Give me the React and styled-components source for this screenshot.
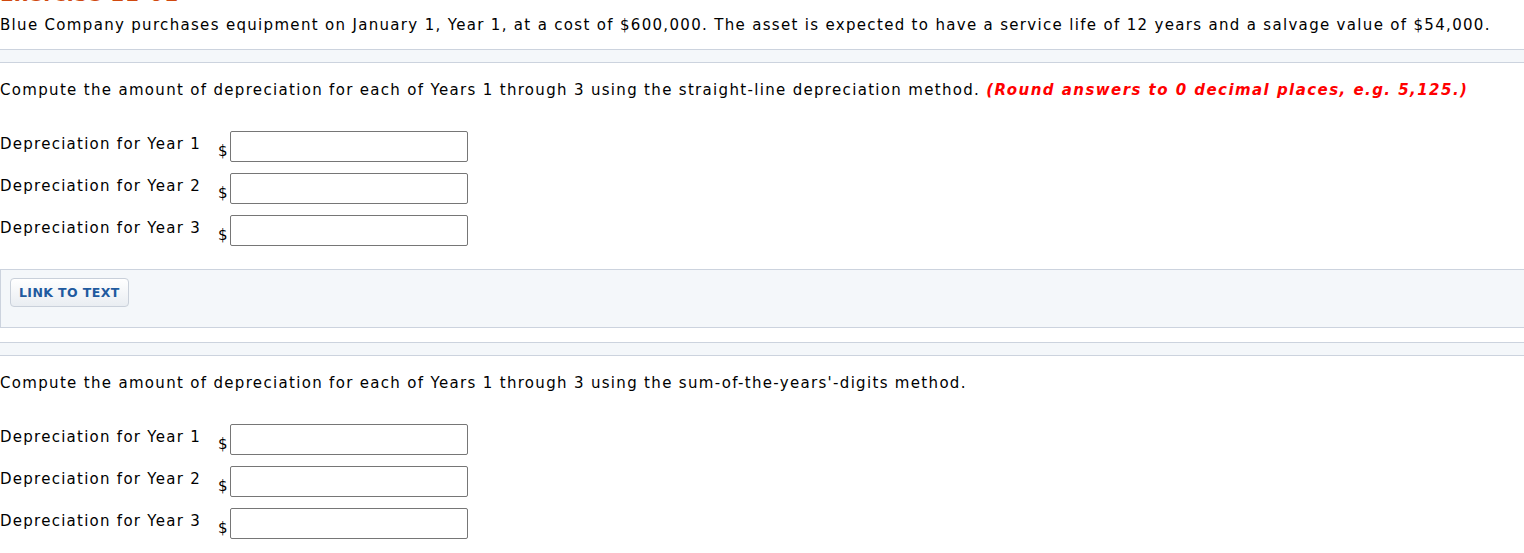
import React from 'react';
import styled, { createGlobalStyle } from 'styled-components';

const GlobalStyle = createGlobalStyle`
    body {
        margin: 0;
        background: #fff;
        font-family: "DejaVu Sans", Verdana, sans-serif;
        color: #000;
    }
`;

const Page = styled.div`
    width: 1524px;
    overflow: hidden;
`;

const Heading = styled.h2`
    margin: -18px 0 0;
    font-size: 20px;
    line-height: 24px;
    font-weight: bold;
    letter-spacing: 1px;
    color: #d0490f;
`;

const Text = styled.p`
    margin: ${(p) => p.margin || '0'};
    font-size: 15px;
    line-height: 18px;
    letter-spacing: 1.32px;
    white-space: nowrap;
`;

const Hint = styled.span`
    color: #ff0000;
    font-weight: bold;
    font-style: italic;
    letter-spacing: 1.45px;
`;

const Band = styled.div`
    height: 12px;
    margin: ${(p) => p.margin || '0'};
    background: #f4f7fa;
    border-top: 1px solid #ccd3de;
    border-bottom: 1px solid #ccd3de;
`;

const Fields = styled.div`
    display: flex;
    flex-direction: column;
    gap: 11px;
    margin-top: 32px;
`;

const Row = styled.div`
    display: flex;
    align-items: flex-start;
`;

const Label = styled.span`
    width: 218px;
    padding-top: 4px;
    font-size: 15px;
    line-height: 18px;
    letter-spacing: 1.26px;
`;

const Dollar = styled.span`
    align-self: flex-end;
    width: 12px;
    font-size: 15px;
    line-height: 18px;
    margin-bottom: 2px;
`;

const Input = styled.input`
    box-sizing: border-box;
    width: 238px;
    height: 31px;
    margin: 0;
    border: 1px solid #767676;
    border-radius: 2px;
    background: #fff;
    font-family: "DejaVu Sans", sans-serif;
    font-size: 15px;
`;

const Panel = styled.div`
    box-sizing: border-box;
    height: 59px;
    margin-top: 23px;
    padding: 8px 9px;
    background: #f4f7fa;
    border: 1px solid #ccd3de;
    border-right: none;
`;

const Button = styled.button`
    box-sizing: border-box;
    height: 29px;
    padding: 0 8px;
    border: 1px solid #c9d0da;
    border-radius: 4px;
    background: linear-gradient(#ffffff, #e9edf2);
    color: #1f5a9f;
    font-family: "DejaVu Sans", Verdana, sans-serif;
    font-size: 12.5px;
    font-weight: bold;
    letter-spacing: 0.4px;
    cursor: pointer;
`;

const years = [1, 2, 3];

const FieldGroup = () => (
    <Fields>
        {years.map((y) => (
            <Row key={y}>
                <Label>Depreciation for Year {y}</Label>
                <Dollar>$</Dollar>
                <Input type="text" />
            </Row>
        ))}
    </Fields>
);

const App = () => (
    <Page>
        <GlobalStyle />
        <Heading>Exercise 11-01</Heading>
        <Text margin="10px 0 0">
            Blue Company purchases equipment on January 1, Year 1, at a cost of $600,000. The asset is expected to have a service life of 12 years and a salvage value of $54,000.
        </Text>
        <Band margin="15px 0 0" />
        <Text margin="18px 0 0">
            Compute the amount of depreciation for each of Years 1 through 3 using the straight-line depreciation method.{' '}
            <Hint>(Round answers to 0 decimal places, e.g. 5,125.)</Hint>
        </Text>
        <FieldGroup />
        <Panel>
            <Button>LINK TO TEXT</Button>
        </Panel>
        <Band margin="14px 0 0" />
        <Text margin="18px 0 0">
            Compute the amount of depreciation for each of Years 1 through 3 using the sum-of-the-years'-digits method.
        </Text>
        <FieldGroup />
    </Page>
);

export default App;
